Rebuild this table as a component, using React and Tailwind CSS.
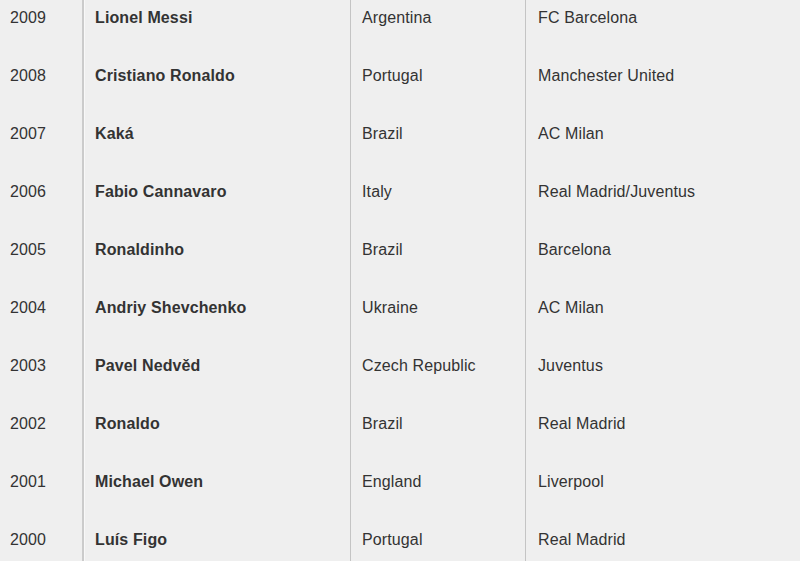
import React from 'react';

const winners = [
  { year: '2009', player: 'Lionel Messi', country: 'Argentina', club: 'FC Barcelona' },
  { year: '2008', player: 'Cristiano Ronaldo', country: 'Portugal', club: 'Manchester United' },
  { year: '2007', player: 'Kaká', country: 'Brazil', club: 'AC Milan' },
  { year: '2006', player: 'Fabio Cannavaro', country: 'Italy', club: 'Real Madrid/Juventus' },
  { year: '2005', player: 'Ronaldinho', country: 'Brazil', club: 'Barcelona' },
  { year: '2004', player: 'Andriy Shevchenko', country: 'Ukraine', club: 'AC Milan' },
  { year: '2003', player: 'Pavel Nedvěd', country: 'Czech Republic', club: 'Juventus' },
  { year: '2002', player: 'Ronaldo', country: 'Brazil', club: 'Real Madrid' },
  { year: '2001', player: 'Michael Owen', country: 'England', club: 'Liverpool' },
  { year: '2000', player: 'Luís Figo', country: 'Portugal', club: 'Real Madrid' },
];

export default function App() {
  return (
    <div
      className="w-[800px] h-[561px] overflow-hidden bg-[#efefef] text-[#333333] text-[16px] tracking-[0.12px]"
      style={{ fontFamily: '"Liberation Sans", Arial, sans-serif' }}
    >
      {/* columns carry the dividers, rows are 58px */}
      <div className="flex -mt-[11px]">
        <div className="w-[82px] pl-[10px]">
          {winners.map((w) => (
            <div key={w.year} className="h-[58px] flex items-center">{w.year}</div>
          ))}
        </div>
        <div className="w-[268px] pl-[11px] border-l-2 border-[#cbcbcb] shadow-[inset_1px_0_0_#f8f8f8]">
          {winners.map((w) => (
            <div key={w.year} className="h-[58px] flex items-center font-bold">{w.player}</div>
          ))}
        </div>
        <div className="w-[175px] pl-[11px] border-l border-[#c4c4c4]">
          {winners.map((w) => (
            <div key={w.year} className="h-[58px] flex items-center">{w.country}</div>
          ))}
        </div>
        <div className="flex-1 pl-[12px] border-l border-[#c4c4c4]">
          {winners.map((w) => (
            <div key={w.year} className="h-[58px] flex items-center">{w.club}</div>
          ))}
        </div>
      </div>
    </div>
  );
}
